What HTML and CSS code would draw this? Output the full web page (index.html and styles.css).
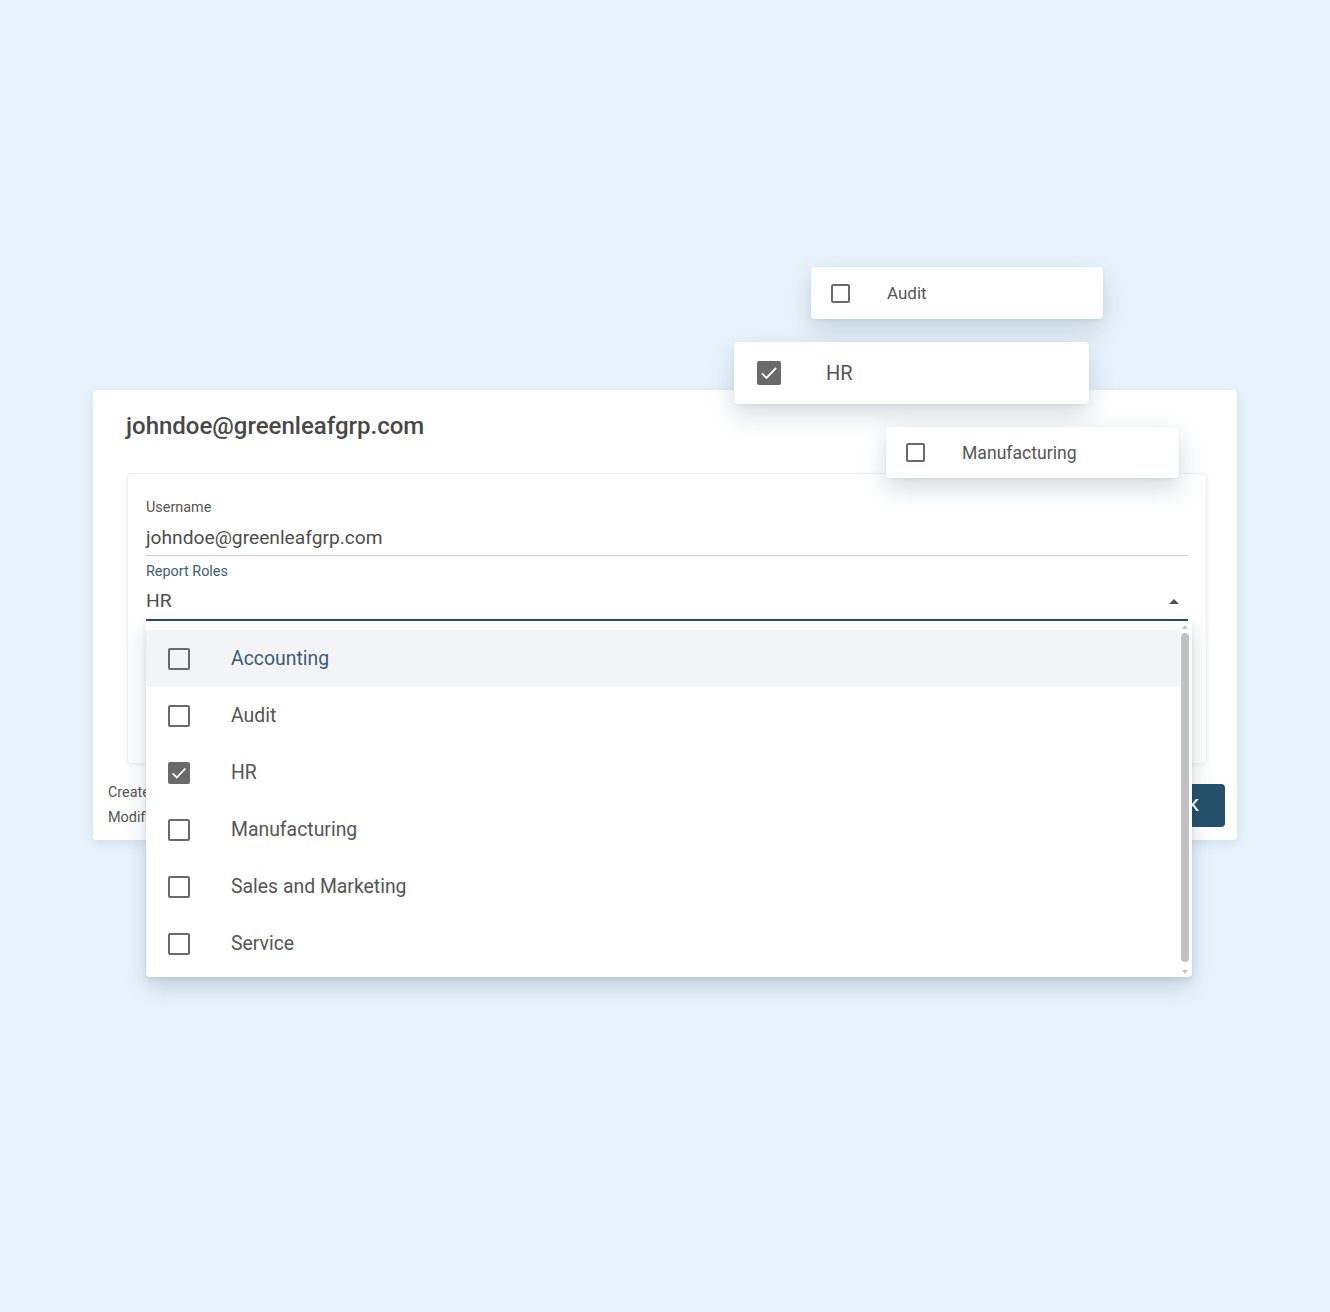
FILE: index.html
```html
<!DOCTYPE html>
<html lang="en">
<head>
    <meta charset="UTF-8">
    <meta name="viewport" content="width=device-width, initial-scale=1.0">
    <title>Report roles</title>
    <link rel="stylesheet" href="styles.css">
</head>
<body>
    <div class="stage">
        <div class="dialog">
            <h1 class="dialog-title">johndoe@greenleafgrp.com</h1>
            <div class="dialog-body">
                <div class="form-card">
                    <div class="field">
                        <label class="field-label">Username</label>
                        <div class="field-value">johndoe@greenleafgrp.com</div>
                    </div>
                    <div class="field field-select">
                        <label class="field-label label-active">Report Roles</label>
                        <div class="field-value select-value">
                            <span>HR</span>
                            <span class="arrow-up"></span>
                        </div>

                        <div class="menu">
                            <ul class="menu-list">
                                <li class="menu-item active"><span class="box"></span>Accounting</li>
                                <li class="menu-item"><span class="box"></span>Audit</li>
                                <li class="menu-item"><span class="box checked"><svg viewBox="0 0 24 24"><path d="M3.5 12.5l5.5 5.5L20.5 6" fill="none" stroke="#fff" stroke-width="2.4"/></svg></span>HR</li>
                                <li class="menu-item"><span class="box"></span>Manufacturing</li>
                                <li class="menu-item"><span class="box"></span>Sales and Marketing</li>
                                <li class="menu-item"><span class="box"></span>Service</li>
                            </ul>
                            <div class="scrollbar">
                                <span class="scroll-arrow up"></span>
                                <span class="scroll-thumb"></span>
                                <span class="scroll-arrow down"></span>
                            </div>
                        </div>
                    </div>
                </div>
            </div>
            <div class="dialog-footer">
                <div class="meta">
                    <p>Created</p>
                    <p>Modified</p>
                </div>
                <button class="ok-btn">OK</button>
            </div>
        </div>

        <div class="chip chip-audit"><span class="box"></span>Audit</div>
        <div class="chip chip-hr"><span class="box checked"><svg viewBox="0 0 24 24"><path d="M3.5 12.5l5.5 5.5L20.5 6" fill="none" stroke="#fff" stroke-width="2.2"/></svg></span>HR</div>
        <div class="chip chip-manu"><span class="box"></span>Manufacturing</div>
    </div>
</body>
</html>
```

FILE: styles.css
```css
* {
    margin: 0;
    padding: 0;
    box-sizing: border-box;
    font-family: Roboto, 'Liberation Sans', sans-serif;
}

body {
    background-color: #e8f4fc;
    color: #555;
    width: 1330px;
    height: 1312px;
    overflow: hidden;
}

.stage {
    position: relative;
    padding: 390px 0 0 93px;
    height: 100%;
}

.dialog {
    width: 1144px;
    background-color: white;
    border-radius: 4px;
    box-shadow: 0 3px 12px rgba(60, 90, 120, 0.14);
}

.dialog-title {
    padding: 21px 30px 0 33px;
    font-size: 24px;
    line-height: 30px;
    font-weight: 500;
    color: #484848;
}

.dialog-body {
    padding: 32px 30px 0 34px;
}

.form-card {
    padding: 26px 18px 142px 18px;
    border: 1px solid #f0f0f0;
    border-radius: 4px;
    box-shadow: 0 1px 4px rgba(0, 0, 0, 0.06);
}

.field-label {
    display: block;
    font-size: 14.4px;
    line-height: 16px;
    color: #555;
}

.field-value {
    margin-top: 10px;
    padding-bottom: 5px;
    font-size: 19.2px;
    line-height: 24px;
    color: #4d4d4d;
    border-bottom: 1px solid #cfcfcf;
}

.field-select {
    position: relative;
    margin-top: 8px;
}

.label-active {
    color: #3e5c76;
}

.select-value {
    display: flex;
    justify-content: space-between;
    align-items: center;
    margin-top: 9px;
    padding: 0 9px 6px 0;
    border-bottom: 2px solid #2d4a62;
}

.arrow-up {
    width: 0;
    height: 0;
    border-left: 5px solid transparent;
    border-right: 5px solid transparent;
    border-bottom: 5px solid #555;
}

.menu {
    position: absolute;
    top: 100%;
    left: 0;
    width: 1046px;
    height: 356px;
    display: flex;
    background-color: white;
    border-radius: 0 0 4px 4px;
    box-shadow: 0 10px 22px rgba(40, 70, 100, 0.2), 0 2px 5px rgba(0, 0, 0, 0.08);
    z-index: 5;
}

.menu-list {
    flex: 1;
    list-style: none;
    padding-top: 9px;
}

.menu-item {
    display: flex;
    align-items: center;
    height: 57px;
    padding-left: 22px;
    font-size: 19.4px;
    color: #555;
}

.menu-item .box {
    width: 22px;
    height: 22px;
    margin-right: 41px;
}

.menu-item.active {
    background-color: #f2f4f6;
    color: #3e5c76;
}

.box {
    display: inline-flex;
    flex-shrink: 0;
    border: 2px solid #6a6a6a;
    border-radius: 2px;
}

.box.checked {
    background-color: #6a6a6a;
}

.box svg {
    width: 100%;
    height: 100%;
}

.scrollbar {
    width: 10px;
    margin-right: 2px;
    display: flex;
    flex-direction: column;
    align-items: center;
    padding: 4px 0 3px;
}

.scroll-arrow {
    width: 0;
    height: 0;
    border-left: 3px solid transparent;
    border-right: 3px solid transparent;
}

.scroll-arrow.up {
    border-bottom: 4px solid #c4c4c4;
}

.scroll-arrow.down {
    border-top: 4px solid #c4c4c4;
}

.scroll-thumb {
    flex: 1;
    width: 8px;
    margin: 4px 0 8px;
    background-color: #c1c1c1;
    border-radius: 4px;
}

.dialog-footer {
    display: flex;
    justify-content: space-between;
    align-items: center;
    padding: 16px 12px 10px 15px;
}

.meta p {
    font-size: 14.4px;
    line-height: 25px;
    color: #555;
}

.ok-btn {
    width: 75px;
    height: 43px;
    background-color: #24506a;
    color: white;
    border: none;
    border-radius: 4px;
    font-size: 17px;
    font-weight: 500;
}

.chip {
    position: absolute;
    display: flex;
    align-items: center;
    background-color: white;
    border-radius: 4px;
    color: #555;
    box-shadow: 0 10px 26px rgba(40, 70, 100, 0.2), 0 1px 3px rgba(0, 0, 0, 0.06);
    z-index: 10;
}

.chip-audit {
    left: 811px;
    top: 267px;
    width: 292px;
    height: 52px;
    padding-left: 20px;
    font-size: 17px;
}

.chip-audit .box,
.chip-manu .box {
    width: 19px;
    height: 19px;
    margin-right: 37px;
}

.chip-hr {
    left: 734px;
    top: 342px;
    width: 355px;
    height: 62px;
    padding-left: 23px;
    font-size: 20px;
}

.chip-hr .box {
    width: 24px;
    height: 24px;
    margin-right: 45px;
}

.chip-manu {
    left: 886px;
    top: 427px;
    width: 293px;
    height: 51px;
    padding-left: 20px;
    font-size: 17.6px;
}
```
